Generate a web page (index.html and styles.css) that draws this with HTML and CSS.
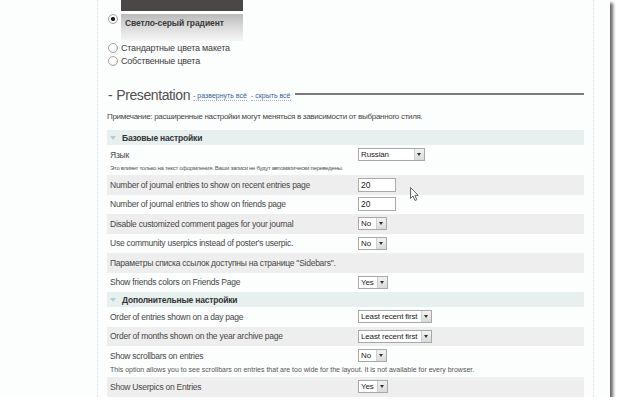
FILE: index.html
```html
<!DOCTYPE html>
<html lang="ru">
<head>
<meta charset="utf-8">
<title>Presentation</title>
<link rel="stylesheet" href="styles.css">
</head>
<body>
<div class="paper">
  <div class="container">
    <div class="theme-dark"></div>
    <div class="theme-option">
      <span class="radio checked"></span>
      <div class="theme-preview">Светло-серый градиент</div>
    </div>
    <div class="radio-line"><span class="radio"></span>Стандартные цвета макета</div>
    <div class="radio-line"><span class="radio"></span>Собственные цвета</div>

    <div class="section-title">
      <h2><span class="dash">-</span>Presentation</h2>
      <a class="toggle">- развернуть всё</a>
      <a class="toggle">- скрыть всё</a>
      <span class="rule"></span>
    </div>
    <p class="note">Примечание: расширенные настройки могут меняться в зависимости от выбранного стиля.</p>

    <div class="group-head"><span class="tri"></span>Базовые настройки</div>
    <div class="row tall">
      <div class="row-main">
        <span class="label">Язык</span>
        <span class="select w-lang"><span class="val">Russian</span><span class="btn"></span></span>
      </div>
      <div class="hint ru">Это влияет только на текст оформления. Ваши записи не будут автоматически переведены.</div>
    </div>
    <div class="row alt"><div class="row-main"><span class="label">Number of journal entries to show on recent entries page</span><span class="input">20</span></div></div>
    <div class="row"><div class="row-main"><span class="label">Number of journal entries to show on friends page</span><span class="input">20</span></div></div>
    <div class="row alt"><div class="row-main"><span class="label">Disable customized comment pages for your journal</span><span class="select w-no"><span class="val">No</span><span class="btn"></span></span></div></div>
    <div class="row"><div class="row-main"><span class="label">Use community userpics instead of poster's userpic.</span><span class="select w-no"><span class="val">No</span><span class="btn"></span></span></div></div>
    <div class="row alt"><div class="row-main"><span class="label wide">Параметры списка ссылок доступны на странице "Sidebars".</span></div></div>
    <div class="row"><div class="row-main"><span class="label">Show friends colors on Friends Page</span><span class="select w-yes"><span class="val">Yes</span><span class="btn"></span></span></div></div>

    <div class="group-head"><span class="tri"></span>Дополнительные настройки</div>
    <div class="row"><div class="row-main"><span class="label">Order of entries shown on a day page</span><span class="select w-order"><span class="val">Least recent first</span><span class="btn"></span></span></div></div>
    <div class="row alt"><div class="row-main"><span class="label">Order of months shown on the year archive page</span><span class="select w-order"><span class="val">Least recent first</span><span class="btn"></span></span></div></div>
    <div class="row tall2">
      <div class="row-main"><span class="label">Show scrollbars on entries</span><span class="select w-no"><span class="val">No</span><span class="btn"></span></span></div>
      <div class="hint">This option allows you to see scrollbars on entries that are too wide for the layout. It is not available for every browser.</div>
    </div>
    <div class="row alt"><div class="row-main"><span class="label">Show Userpics on Entries</span><span class="select w-yes"><span class="val">Yes</span><span class="btn"></span></span></div></div>
  </div>

  <svg class="cursor" width="10" height="15" viewBox="0 0 10 15">
    <path d="M0.5 0.5 L0.5 11.5 L3 9 L5 13.5 L6.8 12.7 L4.9 8.4 L8.2 8.4 Z" fill="#fff" stroke="#555" stroke-width="0.9" stroke-linejoin="round"/>
  </svg>
</div>
</body>
</html>
```
FILE: styles.css
```css
* { box-sizing: border-box; }

body {
  margin: 0;
  background: #fff;
  font-family: "Liberation Sans", Arial, sans-serif;
  color: #464646;
}

.paper {
  position: relative;
  width: 610px;
  height: 397px;
  background: #fcfdfd;
  overflow: hidden;
  box-shadow: 3px 3px 3px rgba(0, 0, 0, 0.6);
}

.container {
  margin-left: 97px;
  width: 497px;
  height: 100%;
  padding: 0 9px;
  border-left: 1px dotted #d2e1ea;
  border-right: 1px dotted #d2e1ea;
}

/* theme choice */
.theme-dark {
  margin-left: 14px;
  width: 122px;
  height: 11px;
  background: #4a4847;
}

.theme-option {
  display: flex;
  margin-top: 3px;
  height: 27px;
}

.radio {
  flex: none;
  display: inline-block;
  width: 10px;
  height: 10px;
  margin-left: 1px;
  border: 1px solid #a2a2a2;
  border-radius: 50%;
  background: radial-gradient(circle at 40% 35%, #fff 40%, #e6e6e6);
}

.radio.checked {
  background: radial-gradient(circle, #222 0 1.8px, #fff 2.4px, #ececec);
}

.theme-preview {
  margin-left: 3px;
  width: 122px;
  height: 27px;
  padding: 3px 0 0 4px;
  font-size: 8.5px;
  letter-spacing: -0.1px;
  line-height: 12px;
  font-weight: bold;
  white-space: nowrap;
  color: #3a3a3a;
  background: linear-gradient(#b9b9b9, #d9d9d9 45%, #f6f6f6);
}

.radio-line {
  display: flex;
  align-items: center;
  gap: 3px;
  height: 13px;
  font-size: 9px;
  letter-spacing: -0.2px;
  color: #3e3e3e;
}

/* section title */
.section-title {
  display: flex;
  align-items: center;
  margin-top: 19px;
  height: 18px;
}

.section-title h2 {
  display: flex;
  align-items: center;
  margin: 0 3px 0 1px;
  font-size: 14px;
  line-height: 18px;
  font-weight: normal;
  color: #505050;
  letter-spacing: -0.4px;
}

.dash {
  margin-right: 4px;
}

.toggle {
  margin-top: 2px;
  margin-right: 4px;
  font-size: 7px;
  color: #3b5ea0;
  border-bottom: 1px dotted #9fb3d5;
  line-height: 9px;
}

.rule {
  flex: 1;
  height: 2px;
  margin-top: -2px;
  background: #7a7a7a;
}

.note {
  margin: 7px 0;
  font-size: 8px;
  letter-spacing: -0.3px;
  line-height: 12px;
  color: #464646;
  white-space: nowrap;
}

/* groups */
.group-head {
  display: flex;
  align-items: center;
  height: 15px;
  padding-left: 3px;
  font-size: 8.5px;
  letter-spacing: -0.2px;
  font-weight: bold;
  color: #333;
  background: #e8efef;
}

.tri {
  width: 0;
  height: 0;
  margin-right: 6px;
  border-left: 3px solid transparent;
  border-right: 3px solid transparent;
  border-top: 4px solid #b4cbdb;
}

.row {
  height: 19.5px;
  padding-left: 3px;
}

.row.alt { background: #efeeee; }

.row.tall { height: 30px; padding-top: 3px; }
.row.tall2 { height: 31px; }

.row-main {
  display: flex;
  align-items: center;
  height: 19.5px;
}

.row.tall .row-main { height: 13px; }

.label {
  flex: none;
  width: 248px;
  font-size: 8.5px;
  letter-spacing: -0.25px;
  color: #474747;
  white-space: nowrap;
}

.label.wide { width: auto; }

.hint {
  margin-top: 1px;
  font-size: 7px;
  line-height: 10px;
  color: #555;
  white-space: nowrap;
}

.hint.ru {
  font-size: 6px;
  letter-spacing: -0.3px;
  margin-top: 2px;
}

.row.tall2 .hint { margin-top: -1px; }

/* controls */
.select {
  display: inline-flex;
  align-items: stretch;
  height: 13px;
  border: 1px solid #a8a8a8;
  background: #fff;
  font-size: 8px;
  letter-spacing: -0.15px;
  color: #222;
}

.select .val {
  flex: 1;
  padding-left: 2px;
  line-height: 11px;
  white-space: nowrap;
}

.select .btn {
  position: relative;
  flex: none;
  width: 10px;
  border-left: 1px solid #d0d0d0;
  background: linear-gradient(#f2f2f2, #dadada);
}

.select .btn::after {
  content: "";
  position: absolute;
  left: 2px;
  top: 4px;
  border-left: 2px solid transparent;
  border-right: 2px solid transparent;
  border-top: 3px solid #333;
}

.w-lang { width: 67px; }
.w-no { width: 29px; }
.w-yes { width: 30px; }
.w-order { width: 74px; }

.input {
  display: inline-block;
  width: 38px;
  height: 14px;
  padding-left: 2px;
  border: 1px solid #aaa;
  background: #fff;
  font-size: 8.5px;
  line-height: 12px;
  color: #222;
}

.cursor {
  position: absolute;
  left: 410px;
  top: 187px;
}
```
